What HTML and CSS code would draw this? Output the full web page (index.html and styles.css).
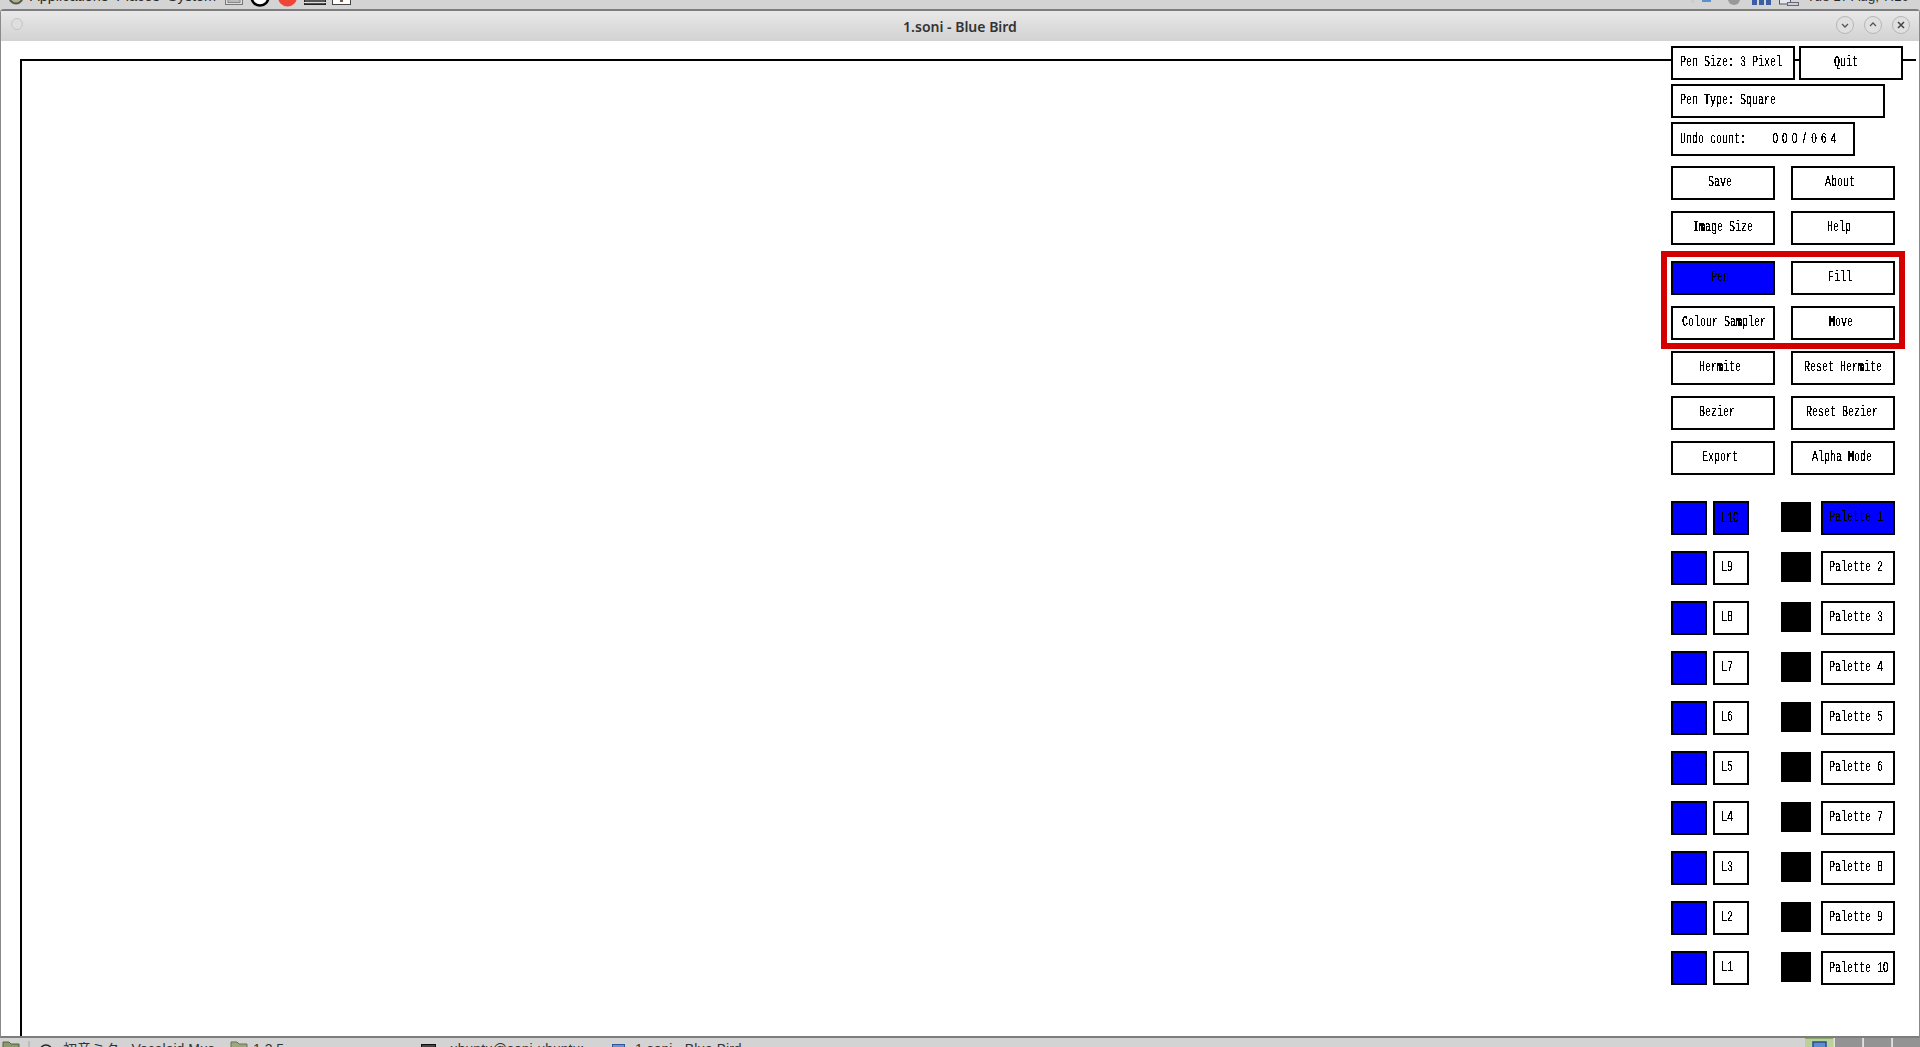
FILE: index.html
```html
<!DOCTYPE html>
<html lang="en">
<head>
<meta charset="UTF-8" />
<title>1.soni - Blue Bird</title>
<link rel="stylesheet" href="styles.css">
</head>
<body>

<svg class="defs" width="0" height="0">
  <filter id="bitmap" color-interpolation-filters="sRGB">
    <feComponentTransfer>
      <feFuncR type="discrete" tableValues="0 0 1"/>
      <feFuncG type="discrete" tableValues="0 0 1"/>
      <feFuncB type="discrete" tableValues="0 0 1"/>
    </feComponentTransfer>
  </filter>
</svg>

<!-- Desktop panel, cut off by the top of the shot -->
<div class="top-panel">
  <div class="panel-left">
    <svg class="gnome-foot" width="16" height="5" viewBox="0 0 16 5"><circle cx="8" cy="-3" r="6.500" fill="#a9b18f" stroke="#54584a" stroke-width="2"/></svg>
    <span class="menu-item">Applications</span>
    <span class="menu-item">Places</span>
    <span class="menu-item last">System</span>
    <svg class="launcher" width="18" height="5" viewBox="0 0 18 5"><rect x="0.500" y="-5" width="17" height="9.500" fill="#ddd" stroke="#777"/><rect x="3" y="-3" width="12" height="5.500" fill="#bbb" stroke="#888"/></svg>
    <svg class="launcher" width="22" height="7" viewBox="0 0 22 7"><circle cx="11" cy="-3" r="8.500" fill="#fff" stroke="#000" stroke-width="2.500"/></svg>
    <svg class="launcher" width="21" height="7" viewBox="0 0 21 7"><circle cx="10.500" cy="-3" r="9.500" fill="#ef4536"/></svg>
    <svg class="launcher" width="22" height="6" viewBox="0 0 22 6"><rect x="0.500" y="-5" width="21" height="9.500" fill="#555" stroke="#222"/><rect x="0" y="2" width="22" height="1" fill="#ddd"/></svg>
    <svg class="launcher" width="19" height="5" viewBox="0 0 19 5"><rect x="0.500" y="-5" width="18" height="9.500" fill="#fff" stroke="#444"/><rect x="8" y="0" width="3" height="2" fill="#754"/></svg>
  </div>
  <div class="panel-right">
    <svg width="108" height="8" viewBox="0 0 108 8">
      <rect x="0" y="0" width="3" height="3" fill="#ccc"/>
      <rect x="11" y="0" width="9" height="2" fill="#5a8fd0"/>
      <circle cx="43" cy="-1" r="6" fill="#999"/>
      <rect x="61" y="0" width="5" height="5" fill="#3a5fa5"/><rect x="68" y="0" width="5" height="5" fill="#3a5fa5"/><rect x="75" y="0" width="5" height="5" fill="#3a5fa5"/>
      <rect x="88.500" y="-1" width="11" height="5" fill="#e4e8ee" stroke="#556"/><rect x="96.500" y="2.500" width="11" height="3" fill="#ccd" stroke="#667"/>
    </svg>
    <span class="clock">Tue 17 Aug, 7:10</span>
  </div>
</div>

<div class="window">
  <div class="title-bar">
    <span class="title-dot"></span>
    <span class="title-text">1.soni - Blue Bird</span>
    <div class="title-buttons">
      <span class="title-btn"><svg width="10" height="10" viewBox="0 0 10 10"><path d="M2 4l3 3 3-3" fill="none" stroke="#555" stroke-width="1.300"/></svg></span>
      <span class="title-btn"><svg width="10" height="10" viewBox="0 0 10 10"><path d="M2 6l3-3 3 3" fill="none" stroke="#555" stroke-width="1.300"/></svg></span>
      <span class="title-btn"><svg width="10" height="10" viewBox="0 0 10 10"><path d="M2 2l6 6M8 2l-6 6" fill="none" stroke="#444" stroke-width="1.500"/></svg></span>
    </div>
  </div>

  <div class="client">
    <div class="canvas"></div>

    <div class="controls">
      <div class="status-row">
        <div class="btn w-size"><span class="lbl">Pen Size: 3 Pixel</span></div>
        <div class="btn w-quit t-quit"><span class="lbl">Quit</span></div>
      </div>
      <div class="status-row">
        <div class="btn w-type"><span class="lbl">Pen Type: Square</span></div>
      </div>
      <div class="status-row">
        <div class="btn w-undo"><span class="lbl">Undo count:<span class="undo-num">000<span class="slash">/</span>064</span></span></div>
      </div>

      <div class="actions first-actions">
        <div class="btn t-save"><span class="lbl">Save</span></div>
        <div class="btn t-about"><span class="lbl">About</span></div>
        <div class="btn t-imgsize"><span class="lbl">Image Size</span></div>
        <div class="btn t-help"><span class="lbl">Help</span></div>
      </div>

      <div class="actions tool-group">
        <div class="btn on t-pen"><span class="lbl">Pen</span></div>
        <div class="btn t-fill"><span class="lbl">Fill</span></div>
        <div class="btn t-sampler"><span class="lbl">Colour Sampler</span></div>
        <div class="btn t-move"><span class="lbl">Move</span></div>
      </div>

      <div class="actions">
        <div class="btn t-hermite"><span class="lbl">Hermite</span></div>
        <div class="btn t-rhermite"><span class="lbl">Reset Hermite</span></div>
        <div class="btn t-bezier"><span class="lbl">Bezier</span></div>
        <div class="btn t-rbezier"><span class="lbl">Reset Bezier</span></div>
        <div class="btn t-export"><span class="lbl">Export</span></div>
        <div class="btn t-alpha"><span class="lbl">Alpha Mode</span></div>
      </div>

      <div class="layers">
        <div class="layer-row"><div class="swatch"></div><div class="btn layer on"><span class="lbl">L1<span class="zero">0</span></span></div><div class="ink"></div><div class="btn palette on"><span class="lbl">Palette 1</span></div></div>
        <div class="layer-row"><div class="swatch"></div><div class="btn layer"><span class="lbl">L9</span></div><div class="ink"></div><div class="btn palette"><span class="lbl">Palette 2</span></div></div>
        <div class="layer-row"><div class="swatch"></div><div class="btn layer"><span class="lbl">L8</span></div><div class="ink"></div><div class="btn palette"><span class="lbl">Palette 3</span></div></div>
        <div class="layer-row"><div class="swatch"></div><div class="btn layer"><span class="lbl">L7</span></div><div class="ink"></div><div class="btn palette"><span class="lbl">Palette 4</span></div></div>
        <div class="layer-row"><div class="swatch"></div><div class="btn layer"><span class="lbl">L6</span></div><div class="ink"></div><div class="btn palette"><span class="lbl">Palette 5</span></div></div>
        <div class="layer-row"><div class="swatch"></div><div class="btn layer"><span class="lbl">L5</span></div><div class="ink"></div><div class="btn palette"><span class="lbl">Palette 6</span></div></div>
        <div class="layer-row"><div class="swatch"></div><div class="btn layer"><span class="lbl">L4</span></div><div class="ink"></div><div class="btn palette"><span class="lbl">Palette 7</span></div></div>
        <div class="layer-row"><div class="swatch"></div><div class="btn layer"><span class="lbl">L3</span></div><div class="ink"></div><div class="btn palette"><span class="lbl">Palette 8</span></div></div>
        <div class="layer-row"><div class="swatch"></div><div class="btn layer"><span class="lbl">L2</span></div><div class="ink"></div><div class="btn palette"><span class="lbl">Palette 9</span></div></div>
        <div class="layer-row"><div class="swatch"></div><div class="btn layer"><span class="lbl">L1</span></div><div class="ink"></div><div class="btn palette"><span class="lbl">Palette 1<span class="zero">0</span></span></div></div>
      </div>
    </div>
  </div>
</div>

<!-- Task bar, also cut off by the bottom of the shot -->
<div class="task-bar">
  <div class="tasks">
    <svg class="task-icon" width="18" height="9" viewBox="0 0 18 9"><path d="M1 10V1h6l2 2h8v7z" fill="#8a9a6c" stroke="#55603f"/></svg>
    <span class="handle"></span>
    <span class="task"><svg class="ti-circle" width="14" height="6" viewBox="0 0 14 6"><circle cx="7" cy="7" r="6" fill="none" stroke="#222" stroke-width="1.500"/></svg>初音ミク - Vocaloid Mus</span>
    <span class="task"><svg class="ti-folder" width="18" height="9" viewBox="0 0 18 9"><path d="M1 10V1h6l2 2h8v7z" fill="#9aa97d" stroke="#667050"/></svg>1.3.5</span>
    <span class="task"><svg class="ti-term" width="15" height="6" viewBox="0 0 15 6"><rect x="0.500" y="0.500" width="14" height="8" fill="#444" stroke="#111"/></svg>ubuntu@soni-ubuntu: ~</span>
    <span class="task"><svg class="ti-win" width="13" height="6" viewBox="0 0 13 6"><rect x="0.500" y="0.500" width="12" height="8" fill="#6d93cc" stroke="#2f5a9a"/></svg>1.soni - Blue Bird</span>
  </div>
  <div class="workspaces">
    <span class="ws active"><svg width="15" height="7" viewBox="0 0 15 7"><rect x="1" y="1" width="13" height="9" fill="#5c8fd0" stroke="#224f8e" stroke-width="1.500"/></svg></span>
    <span class="ws"></span>
    <span class="ws"></span>
    <span class="ws"></span>
  </div>
</div>

</body>
</html>
```

FILE: styles.css
```css
* {
  box-sizing: border-box;
}
html, body {
  height: 100%;
}
body {
  margin: 0;
  display: flex;
  flex-direction: column;
  overflow: hidden;
  font-family: "Liberation Sans", Arial, sans-serif;
  background-color: #d3d3d3;
}
.defs {
  position: absolute;
}

/* Top panel */
.top-panel {
  height: 9px;
  flex: none;
  display: flex;
  justify-content: space-between;
  overflow: hidden;
  background-color: #d4d4d4;
  color: #2a2a2a;
  font-size: 14.5px;
}
.panel-left {
  display: flex;
  align-items: flex-start;
  padding-left: 8px;
}
.gnome-foot {
  margin-right: 6px;
}
.menu-item {
  margin-right: 8px;
  margin-top: -4px;
  line-height: 1px;
}
.menu-item.last {
  margin-right: 9px;
}
.launcher {
  margin-right: 6px;
}
.panel-right {
  display: flex;
  align-items: flex-start;
  padding-right: 11px;
}
.clock {
  margin-left: 8px;
  margin-top: -4px;
  font-size: 13.500px;
  line-height: 1px;
}

/* Window and title bar */
.window {
  flex: 1;
  display: flex;
  flex-direction: column;
  min-height: 0;
  border-top: 2px solid #7d7d7d;
  border-bottom: 2px solid #7d7d7d;
  border-left: 1px solid #8a8a8a;
  border-right: 1px solid #8a8a8a;
  border-radius: 4px 4px 0 0;
  background-color: #fff;
}
.title-bar {
  height: 30px;
  flex: none;
  display: flex;
  align-items: center;
  justify-content: center;
  position: relative;
  background: linear-gradient(#e8e8e8, #d2d2d2);
}
.title-dot {
  position: absolute;
  left: 10px;
  top: 7px;
  width: 12px;
  height: 12px;
  border-radius: 50%;
  border: 1px solid #c4c4c4;
  background-color: #dedede;
}
.title-text {
  font-family: "Noto Sans", sans-serif;
  font-size: 14px;
  font-weight: 600;
  color: #333;
}
.title-buttons {
  position: absolute;
  right: 9px;
  top: 5px;
  display: flex;
  gap: 10px;
}
.title-btn {
  width: 18px;
  height: 18px;
  border-radius: 50%;
  border: 1px solid #b6b6b6;
  background-color: #e0e0e0;
  display: flex;
  align-items: center;
  justify-content: center;
}

/* Drawing area */
.client {
  flex: 1;
  position: relative;
  min-height: 0;
  overflow: hidden;
}
.canvas {
  height: 100%;
  margin: 18px 3px 0 19px;
  border-top: 2px solid #000;
  border-left: 2px solid #000;
}

/* Side controls sit on top of the canvas edge */
.controls {
  position: absolute;
  left: 1670px;
  top: 5px;
  width: 234px;
}
.status-row {
  display: flex;
  gap: 4px;
  margin-bottom: 4px;
}
.btn {
  height: 34px;
  width: 104px;
  flex: none;
  border: 2px solid #000;
  background-color: #fff;
  color: #000;
  white-space: nowrap;
  filter: url(#bitmap);
}
.btn.on, .swatch {
  background-color: #0000ff;
}
.lbl {
  display: block;
  width: 0;
  font-family: "Liberation Mono", monospace;
  font-size: 14px;
  line-height: 28px;
  transform: scaleX(0.714);
  transform-origin: left top;
}
.w-size { width: 124px; padding-left: 7px; }
.w-quit { width: 104px; }
.w-type { width: 214px; padding-left: 7px; }
.w-undo { width: 184px; padding-left: 7px; }
/* plain zeros, the mono face dots them */
.undo-num, .zero {
  font-family: "Liberation Sans", sans-serif;
}
.undo-num {
  margin-left: 37px;
  letter-spacing: 5.800px;
}
.slash {
  margin: 0 2px;
}

.actions {
  display: grid;
  grid-template-columns: 104px 104px;
  column-gap: 16px;
  row-gap: 11px;
  margin-top: 11px;
  width: 224px;
}
.first-actions {
  margin-top: 10px;
}
.tool-group {
  position: relative;
  margin-top: 16px;
}
.tool-group::after {
  content: "";
  position: absolute;
  inset: -10px -10px -9px -10px;
  border: 6px solid #d40000;
  pointer-events: none;
}

/* Label offsets of the action buttons */
.t-quit { padding-left: 33px; }
.t-save { padding-left: 35px; }
.t-about { padding-left: 32px; }
.t-imgsize { padding-left: 20px; }
.t-help { padding-left: 34px; }
.t-pen { padding-left: 38px; }
.t-fill { padding-left: 35px; }
.t-sampler { padding-left: 9px; }
.t-move { padding-left: 36px; }
.t-hermite { padding-left: 26px; }
.t-rhermite { padding-left: 11px; }
.t-bezier { padding-left: 26px; }
.t-rbezier { padding-left: 13px; }
.t-export { padding-left: 29px; }
.t-alpha { padding-left: 19px; }

/* Layers and palettes */
.layers {
  display: flex;
  flex-direction: column;
  gap: 16px;
  margin-top: 26px;
}
.layer-row {
  display: flex;
  align-items: flex-start;
}
.swatch {
  width: 36px;
  height: 34px;
  border: 2px solid #000;
}
.btn.layer {
  width: 36px;
  margin-left: 6px;
  padding-left: 6px;
}
.ink {
  width: 30px;
  height: 30px;
  margin: 1px 10px 0 32px;
  background-color: #000;
}
.btn.palette {
  width: 74px;
  padding-left: 6px;
}

/* Bottom task bar */
.task-bar {
  height: 9px;
  flex: none;
  display: flex;
  justify-content: space-between;
  overflow: hidden;
  background-color: #d3d3d3;
  color: #333;
  font-size: 14px;
}
.tasks {
  display: flex;
  align-items: flex-start;
  padding-left: 2px;
}
.task-icon {
  margin-top: 3px;
}
.handle {
  width: 2px;
  height: 9px;
  margin: 3px 9px 0 8px;
  background-color: #bbb;
}
.task {
  width: 191px;
  display: flex;
  align-items: flex-start;
  padding-top: 3px;
  line-height: 16px;
  white-space: nowrap;
  font-family: "Liberation Sans", "Noto Sans CJK JP", sans-serif;
}
.task svg {
  flex: none;
}
.ti-circle {
  margin: 3px 10px 0 0;
}
.ti-folder {
  margin-right: 5px;
}
.ti-term {
  margin: 3px 14px 0 0;
}
.ti-win {
  margin: 3px 10px 0 0;
}
.workspaces {
  display: flex;
}
.ws {
  width: 28px;
  margin-left: 1px;
  background-color: #939393;
  border-left: 1px solid #e0e0e0;
}
.ws.active {
  background-color: #bcd09b;
  border-top: 1px solid #8fa96a;
  border-left: 0;
  display: flex;
  justify-content: center;
  padding-top: 2px;
}
```
